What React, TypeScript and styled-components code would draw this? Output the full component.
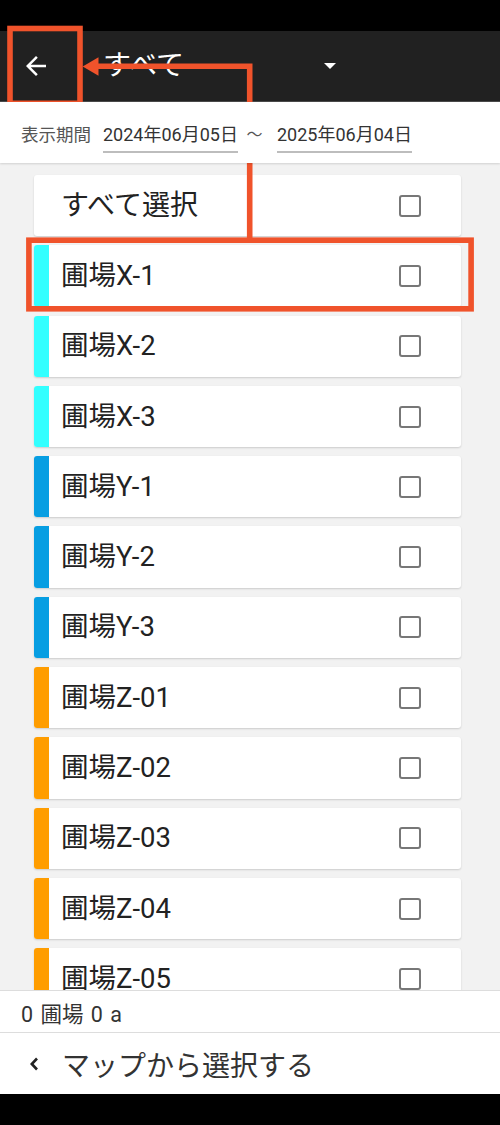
import React from 'react';
import styled, { createGlobalStyle } from 'styled-components';

const colors = {
  statusBar: '#000000',
  header: '#212121',
  listBg: '#f2f2f2',
  text: '#222222',
  subText: '#555555',
  border: '#dddddd',
  check: '#777777',
  mark: '#f0532b',
};

const GlobalStyle = createGlobalStyle`
  html, body {
    margin: 0;
    padding: 0;
    background: #000;
  }
  body {
    font-family: Roboto, "Noto Sans CJK JP", sans-serif;
    color: ${colors.text};
  }
  * {
    box-sizing: border-box;
  }
`;

const Screen = styled.div`
  position: relative;
  width: 500px;
  height: 1125px;
  display: flex;
  flex-direction: column;
  overflow: hidden;
  background: ${colors.listBg};
`;

const SystemBar = styled.div<{ $h: number }>`
  height: ${({ $h }) => $h}px;
  flex-shrink: 0;
  background: ${colors.statusBar};
`;

const Header = styled.header`
  height: 71px;
  flex-shrink: 0;
  display: flex;
  align-items: center;
  background: ${colors.header};
  border-bottom: 1px solid #4a4a4a;
`;

const BackButton = styled.button`
  width: 72px;
  height: 100%;
  display: flex;
  align-items: center;
  justify-content: center;
  padding: 0;
  border: none;
  background: transparent;
  color: #fff;
`;

const Spinner = styled.div`
  margin-left: 31px;
  width: 242px;
  display: flex;
  align-items: center;
  justify-content: space-between;
  padding-right: 9px;
`;

const Title = styled.span`
  font-size: 28px;
  line-height: 38px;
  color: #fff;
`;

const DateBar = styled.div`
  height: 61px;
  flex-shrink: 0;
  display: flex;
  align-items: flex-start;
  padding: 21px 0 0 21px;
  background: #fff;
  box-shadow: 0 1px 2px rgba(0, 0, 0, 0.14);
  position: relative;
  z-index: 1;
`;

const DateLabel = styled.span`
  font-size: 17.5px;
  line-height: 24px;
  color: ${colors.subText};
  width: 82px;
`;

const DateField = styled.span`
  display: block;
  width: 135px;
  font-size: 18px;
  line-height: 24px;
  padding-bottom: 4px;
  color: #333;
  border-bottom: 2px solid #bdbdbd;
  white-space: nowrap;
`;

const Tilde = styled.span`
  width: 39px;
  padding-right: 6px;
  text-align: center;
  font-size: 16px;
  line-height: 24px;
  color: ${colors.subText};
`;

const List = styled.div`
  flex: 1;
  overflow: hidden;
  display: flex;
  flex-direction: column;
  gap: 9px;
  padding: 12px 39px 0 34px;
`;

const Card = styled.div`
  height: 61.3px;
  flex-shrink: 0;
  display: flex;
  align-items: center;
  background: #fff;
  border-radius: 3px;
  overflow: hidden;
  box-shadow: 0 1px 2px rgba(0, 0, 0, 0.16);
`;

const ColorBar = styled.div<{ $color: string }>`
  width: 15px;
  align-self: stretch;
  background: ${({ $color }) => $color};
`;

const CardLabel = styled.span<{ $all?: boolean }>`
  padding-left: ${({ $all }) => ($all ? 27 : 12)}px;
  font-size: ${({ $all }) => ($all ? 28 : 27.5)}px;
  line-height: 38px;
  color: ${colors.text};
  white-space: nowrap;
`;

const CheckBox = styled.span`
  margin-left: auto;
  margin-right: 40px;
  width: 22px;
  height: 22px;
  flex-shrink: 0;
  border: 2.5px solid ${colors.check};
  border-radius: 3px;
`;

const SummaryBar = styled.div`
  height: 42px;
  flex-shrink: 0;
  display: flex;
  align-items: center;
  padding: 2px 0 0 21px;
  background: #fff;
  border-top: 1px solid ${colors.border};
  font-size: 21.5px;
  word-spacing: 2px;
  color: #333;
`;

const MapButton = styled.div`
  height: 62px;
  flex-shrink: 0;
  display: flex;
  align-items: center;
  padding-left: 27px;
  background: #fff;
  border-top: 1.5px solid ${colors.border};
`;

const MapLabel = styled.span`
  margin-left: 19px;
  font-size: 28px;
  line-height: normal;
  color: #333;
`;

const Annotation = styled.svg`
  position: absolute;
  left: 0;
  top: 0;
  pointer-events: none;
`;

type Field = { name: string; color: string };

const CYAN = '#33ffff';
const BLUE = '#079ee2';
const ORANGE = '#ff9d00';

const fields: Field[] = [
  { name: '圃場X-1', color: CYAN },
  { name: '圃場X-2', color: CYAN },
  { name: '圃場X-3', color: CYAN },
  { name: '圃場Y-1', color: BLUE },
  { name: '圃場Y-2', color: BLUE },
  { name: '圃場Y-3', color: BLUE },
  { name: '圃場Z-01', color: ORANGE },
  { name: '圃場Z-02', color: ORANGE },
  { name: '圃場Z-03', color: ORANGE },
  { name: '圃場Z-04', color: ORANGE },
  { name: '圃場Z-05', color: ORANGE },
];

const App: React.FC = () => {
  return (
    <>
      <GlobalStyle />
      <Screen>
        <SystemBar $h={31} />
        <Header>
          <BackButton aria-label="back">
            <svg width="30" height="30" viewBox="0 0 24 24" fill="#fff">
              <path d="M20 11H7.83l5.59-5.59L12 4l-8 8 8 8 1.41-1.41L7.83 13H20v-2z" />
            </svg>
          </BackButton>
          <Spinner>
            <Title>すべて</Title>
            <svg width="12" height="6" viewBox="0 0 12 6" fill="#fff">
              <path d="M0 0h12L6 6z" />
            </svg>
          </Spinner>
        </Header>
        <DateBar>
          <DateLabel>表示期間</DateLabel>
          <DateField>2024年06月05日</DateField>
          <Tilde>〜</Tilde>
          <DateField>2025年06月04日</DateField>
        </DateBar>
        <List>
          <Card>
            <CardLabel $all>すべて選択</CardLabel>
            <CheckBox />
          </Card>
          {fields.map((f) => (
            <Card key={f.name}>
              <ColorBar $color={f.color} />
              <CardLabel>{f.name}</CardLabel>
              <CheckBox />
            </Card>
          ))}
        </List>
        <SummaryBar>0 圃場 0 a</SummaryBar>
        <MapButton>
          <svg width="16" height="16" viewBox="0 0 16 16" fill="none" stroke="#222" strokeWidth="2.6">
            <path d="M10 2.5L4.8 8l5.2 5.5" />
          </svg>
          <MapLabel>マップから選択する</MapLabel>
        </MapButton>
        <SystemBar $h={31} />

        {/* callout drawn over the screenshot */}
        <Annotation width="500" height="1125" viewBox="0 0 500 1125">
          <g fill="none" stroke={colors.mark} strokeWidth="5.6">
            <rect x="10" y="28.5" width="70" height="74.8" />
            <rect x="28.9" y="240.2" width="442.2" height="68.6" />
            <path d="M97 66.3H249.7V238" strokeLinejoin="miter" />
          </g>
          <path d="M82.7 66.5L98.5 57.3V75.7z" fill={colors.mark} />
        </Annotation>
      </Screen>
    </>
  );
};

export default App;
